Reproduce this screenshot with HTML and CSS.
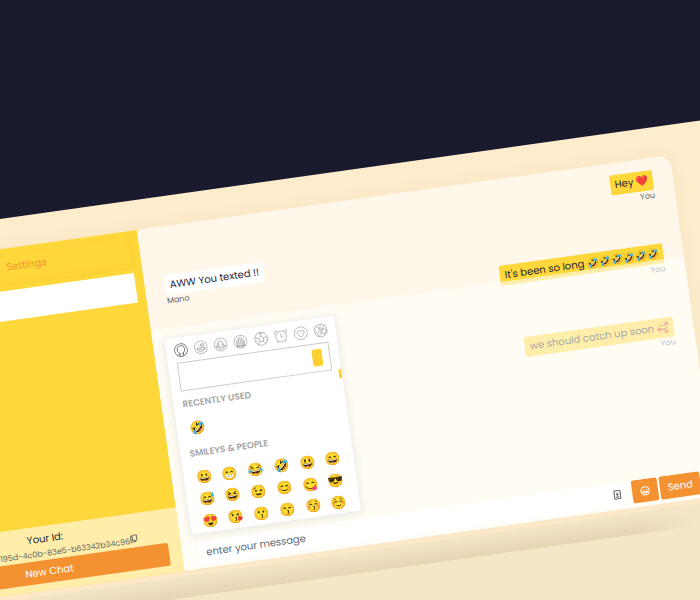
FILE: index.html
```html
<!DOCTYPE html>
<html lang="en">
<head>
<meta charset="utf-8">
<title>Chat</title>
<link rel="stylesheet" href="styles.css">
</head>
<body>
<main class="page">
  <section class="showcase">
    <div class="window">
      <aside class="sidebar">
        <nav class="tabs"><a class="tab" href="#settings">Settings</a></nav>
        <div class="selected"></div>
        <footer class="account">
          <p class="account-title">Your Id:</p>
          <p class="account-id">195d-4c0b-83e5-b63342b34c96<svg class="copy" viewBox="0 0 16 16"><rect x="5" y="1" width="9" height="11" rx="1"/><path d="M5 4H2v11h9v-3"/></svg></p>
          <button class="new-chat" type="button">New Chat</button>
        </footer>
      </aside>

      <div class="chat">
        <div class="log">
          <div class="message own"><p class="bubble">Hey <span class="emoji">❤️</span></p><span class="author">You</span></div>
          <div class="message"><p class="bubble">AWW You texted !!</p><span class="author">Mano</span></div>
          <div class="message own"><p class="bubble">It's been so long 🤣🤣🤣🤣🤣🤣</p><span class="author">You</span></div>
          <div class="message gap"></div>
          <div class="message own"><p class="bubble">we should catch up soon 🥰</p><span class="author">You</span></div>
        </div>

        <form class="composer">
          <div class="field">
            <input class="entry" type="text" placeholder="enter your message" aria-label="Message">
            <svg class="autofill" viewBox="0 0 14 18"><rect x="1.500" y="1.500" width="11" height="15" rx="1"/><path d="M7 5v5M5 8l2 2 2-2M4 13h6"/></svg>
          </div>
          <button class="action" type="button" aria-label="Emoji">
            <svg class="face" viewBox="0 0 18 18"><circle cx="9" cy="9" r="7.500"/><path d="M6 6v2M12 6v2M5 10.500q4 5 8 0z"/></svg>
          </button>
          <button class="action send" type="button">Send</button>
        </form>

        <div class="picker">
          <div class="categories">
            <svg class="category active" viewBox="0 0 26 26"><circle cx="13" cy="13" r="12"/><path d="M10 24v-5c-4-3-5-7-3-11 2-4 10-4 12 0 2 4 1 8-3 11v5M8 22l3-3M18 22l-3-3"/></svg>
            <svg class="category" viewBox="0 0 26 26"><circle cx="13" cy="13" r="12"/><path d="M5 14h16c-1 9-15 9-16 0zM6 17h14M8 9h3M13 7h6v4h-6zM15 9h2"/></svg>
            <svg class="category" viewBox="0 0 26 26"><circle cx="13" cy="13" r="12"/><path d="M4 19l5-10 2-3 4 1 2 4 5 8M9 9l-1 9h10l-2-8M3 15l5 3M18 18l5-3M11 13v2M15 13v2M8 21h10"/></svg>
            <svg class="category" viewBox="0 0 26 26"><circle cx="13" cy="13" r="12"/><path d="M6 22V10l4-3v16M10 7l3-3 3 3v17M16 9l4 2v11M13 7v17M8 12v10M18 12v10M4 21h18"/></svg>
            <svg class="category" viewBox="0 0 26 26"><circle cx="13" cy="13" r="12"/><path d="M13 8l5 4-2 6h-6l-2-6zM13 8V3M18 12l6-2M16 18l4 5M10 18l-4 5M8 12l-6-2M9 2l4 2 4-2M2 17l3-1M24 17l-3-1"/></svg>
            <svg class="category" viewBox="0 0 26 26"><circle cx="13" cy="14" r="10"/><path d="M13 8v7h4M3 9C-1 4 5 0 8 5M23 9c4-5-2-9-5-4M6 21l-2 4M20 21l2 4"/></svg>
            <svg class="category" viewBox="0 0 26 26"><circle cx="13" cy="13" r="12"/><path d="M13 20C3 13 7 7 10 8q2 0 3 2 1-2 3-2c3-1 7 5-3 12z"/></svg>
            <svg class="category" viewBox="0 0 26 26"><circle cx="13" cy="13" r="12"/><path d="M5 4l5 4 1 5-4 5-5-5M14 2l-2 5 4 3 4-4 2-2M14 13l5-2 5 3-4 7-4-2zM10 8l4 5-2 9M7 18l3 6M16 10l3 1"/></svg>
          </div>
          <label class="search"><input class="query" type="search" aria-label="Search emoji"><span class="skin"></span></label>
          <div class="results">
            <h2 class="group">Recently Used</h2>
            <div class="emojis"><span>🤣</span></div>
            <h2 class="group">Smileys &amp; People</h2>
            <div class="emojis">
              <span>😀</span><span>😁</span><span>😂</span><span>🤣</span><span>😃</span><span>😄</span>
              <span>😅</span><span>😆</span><span>😉</span><span>😊</span><span>😋</span><span>😎</span>
              <span>😍</span><span>😘</span><span>😗</span><span>😙</span><span>😚</span><span>☺️</span>
            </div>
          </div>
        </div>
      </div>
    </div>
  </section>
  <section class="next"></section>
</main>
</body>
</html>
```
FILE: styles.css
```css
* { box-sizing: border-box; }

html { height: 100%; overflow: hidden; }

body {
  margin: 0;
  height: 100%;
  overflow: hidden;
  background: #1a1a2e;
  font-family: Poppins, Inter, sans-serif;
  font-size: 10px;
  line-height: 20px;
  color: #252535;
}

p, h2 { margin: 0; }
svg { fill: none; stroke: currentColor; }
button, input { font: inherit; color: inherit; border: 0; padding: 0; }

/* The whole page is tilted and bleeds past the viewport on both sides. */
.page {
  width: calc(100% + 190px);
  margin: 219px 0 0 -160px;
  transform: rotate(-8deg);
  transform-origin: 160px 0;
}

.showcase {
  padding: 30px 58px 27px 26px;
  background: #feedcd;
}

.window {
  display: grid;
  grid-template-columns: 268px 1fr;
  min-height: 344px;
  border-radius: 12px;
  box-shadow: 0 0 16px rgba(120, 90, 20, .06);
}

/* Sidebar */
.sidebar {
  display: flex;
  flex-direction: column;
  background: #fed73a;
}

.tabs {
  margin: 4px 6px 0 0;
  padding: 5px 88px 9px 0;
  text-align: right;
  box-shadow: inset -2px -2px 6px rgba(200, 160, 20, .1);
}

.tab { color: #f7922f; text-decoration: none; }

.selected {
  height: 30px;
  margin: 4px 9px 0 0;
  background: #fff;
}

.account {
  display: flex;
  flex-direction: column;
  margin-top: auto;
  padding: 5px 13px 7px;
  background: #ffedaa;
  text-align: center;
}

.account-title { line-height: 16px; }

.account-id {
  display: flex;
  justify-content: flex-end;
  padding-right: 29px;
  font-size: 8px;
  line-height: 13px;
  color: #65695f;
}

.copy { width: 8px; height: 8px; stroke-width: 2; }

.new-chat {
  height: 23px;
  border-radius: 2px;
  background: #f49131;
  color: #fff;
}

/* Conversation */
.chat {
  position: relative;
  display: flex;
  flex-direction: column;
  border-radius: 0 12px 0 0;
  background: #fff8ea;
  overflow: hidden;
}

.log {
  position: relative;
  flex: 1;
  display: flex;
  flex-direction: column;
  gap: 5px;
  padding: 12px 20px;
}

.log::after {
  content: "";
  position: absolute;
  inset: 102px 0 0;
  background: rgba(255, 255, 251, .58);
}

.message {
  display: flex;
  flex-direction: column;
  align-items: flex-start;
  min-height: 32px;
}

.own { align-items: flex-end; }

.bubble {
  padding: 0 5px;
  border-radius: 2px;
  background: #fff;
  white-space: nowrap;
}

.own .bubble { background: #fed73a; }
.emoji { color: #c0392b; }

.author {
  font-size: 8px;
  line-height: 12px;
  color: #5d6570;
}

.composer {
  display: flex;
  gap: 2px;
  padding: 0 15px 4px 17px;
  background: #fffdf7;
}

.field {
  flex: 1;
  display: flex;
  align-items: center;
  gap: 8px;
  padding: 0 9px 0 7px;
  background: #fff;
}

.entry {
  flex: 1;
  min-width: 0;
  height: 23px;
  background: none;
}

.entry::placeholder { color: #5f6873; }

.autofill { width: 8px; height: 10px; color: #666; stroke-width: 2; }

.action {
  display: grid;
  place-items: center;
  width: 26px;
  height: 23px;
  border-radius: 2px;
  background: #f49131;
  color: #fff;
}

.send { width: 41px; }
.face { width: 10px; height: 10px; stroke-width: 2; }

/* Emoji picker */
.picker {
  position: absolute;
  left: 11px;
  bottom: 34px;
  display: flex;
  flex-direction: column;
  width: 173px;
  height: 199px;
  border: 1px solid #f1f0ee;
  border-radius: 3px;
  background: #fff;
  box-shadow: 0 2px 8px rgba(0, 0, 0, .08);
  overflow: hidden;
}

.categories {
  flex: none;
  display: flex;
  justify-content: space-between;
  padding: 6px 8px 5px;
}

.category { width: 14px; height: 14px; color: #888; }
.active { color: #222; }

.search {
  flex: none;
  display: flex;
  align-items: center;
  height: 29px;
  margin: 0 9px;
  padding: 0 7px;
  border: 1px solid #ccc;
  border-radius: 1px;
}

.query { flex: 1; min-width: 0; background: none; }

.skin {
  width: 10px;
  height: 17px;
  border-radius: 2px;
  background: #fdd02f;
}

.results {
  flex: none;
  padding: 4px 0 0 9px;
  background: linear-gradient(#fdd02f, #fdd02f) right 0 top 0 / 3px 9px no-repeat;
}

.group {
  font-size: 9px;
  line-height: 18px;
  font-weight: 600;
  text-transform: uppercase;
  color: #a5a5a5;
}

.emojis {
  display: grid;
  grid-template-columns: repeat(6, 26px);
  grid-auto-rows: 22px;
  margin: 5px 0 5px -2px;
  font-size: 13px;
  line-height: 22px;
  text-align: center;
}

/* Following section, its shadow falling upwards on the showcase */
.next {
  height: 320px;
  background: #f5e6c8;
}

.next::before {
  content: "";
  display: block;
  height: 22px;
  margin: -22px 82px 0 26px;
  background: linear-gradient(transparent, rgba(150, 120, 60, .15));
  mask-image: linear-gradient(90deg, transparent, #000 60px calc(100% - 60px), transparent);
}
```
